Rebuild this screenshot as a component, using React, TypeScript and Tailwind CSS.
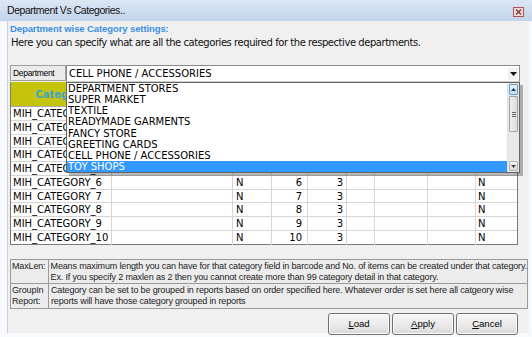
const rows = [
  { name: "MIH_CATEGORY_1", desc: "DEPARTMENT", num: 1 },
  { name: "MIH_CATEGORY_2", desc: "SECTION", num: 2 },
  { name: "MIH_CATEGORY_3", desc: "BRAND", num: 3 },
  { name: "MIH_CATEGORY_4", desc: "SIZE", num: 4 },
  { name: "MIH_CATEGORY_5", desc: "PHONE ACCESSORY", num: 5 },
  { name: "MIH_CATEGORY_6", desc: "", num: 6 },
  { name: "MIH_CATEGORY_7", desc: "", num: 7 },
  { name: "MIH_CATEGORY_8", desc: "", num: 8 },
  { name: "MIH_CATEGORY_9", desc: "", num: 9 },
  { name: "MIH_CATEGORY_10", desc: "", num: 10 },
];

const departments = [
  "DEPARTMENT STORES",
  "SUPER MARKET",
  "TEXTILE",
  "READYMADE GARMENTS",
  "FANCY STORE",
  "GREETING CARDS",
  "CELL PHONE / ACCESSORIES",
  "TOY SHOPS",
];

const WinButton = ({ hot, rest }: { hot: string; rest: string }) => (
  <button className="w-[62px] h-[22px] rounded-[3px] border border-[#707070] bg-gradient-to-b from-[#f6f6f6] via-[#ebebeb] to-[#d9d9d9] text-[9.5px] text-black font-['Liberation_Sans',sans-serif] shadow-[inset_0_0_0_1px_#fcfcfc]">
    <span className="underline">{hot}</span>
    {rest}
  </button>
);

export default function App() {
  return (
    <div className="w-[532px] h-[337px] overflow-hidden bg-[#f7f9fc] font-['DejaVu_Sans',sans-serif] text-black">
      {/* title bar */}
      <div className="h-[21px] flex items-center justify-between pl-[7px] pr-[8px] bg-gradient-to-b from-[#dce7f4] to-[#c2d4eb]">
        <span className="text-[10.5px] tracking-[-0.45px] font-['Liberation_Sans',sans-serif] text-[#111]">
          Department Vs Categories..
        </span>
        <div className="w-[11px] h-[10px] mt-[2px] border border-[#b05454] bg-[#e9dede] flex items-center justify-center">
          <svg width="7" height="6" viewBox="0 0 7 6">
            <path d="M1 0.5 L6 5.5 M6 0.5 L1 5.5" stroke="#8a3030" strokeWidth="1.3" />
          </svg>
        </div>
      </div>

      {/* body */}
      <div className="ml-[7px] mr-[3px] h-[312px] border-l border-[#c4d2e3] bg-[#f0f0f0] pl-[2px] flex flex-col">
        <div className="pt-[1px] leading-[14px] text-[9.5px] font-bold tracking-[-0.1px] font-['Liberation_Sans',sans-serif] text-[#3b8fe2]">
          Department wise Category settings:
        </div>
        <div className="leading-[14px] text-[10px] tracking-[-0.45px] pl-[1px] text-[#111]">
          Here you can specify what are all the categories required for the respective departments.
        </div>

        {/* department selector with open list */}
        <div className="relative mt-[15px] flex h-[17px] w-[510px]">
          <div className="w-[56px] h-[16px] border border-[#a0a0a0] bg-[#ebebeb] pl-[2px] text-[8.5px] leading-[14px] font-['Liberation_Sans',sans-serif] tracking-[-0.3px]">
            Department
          </div>
          <div className="flex-1 h-[17px] border border-[#8a8a8a] border-b-[#cfcfcf] bg-white flex items-center justify-between pl-[2px] pr-[1px]">
            <span className="text-[10px]">CELL PHONE / ACCESSORIES</span>
            <div className="w-[10px] h-[12px] bg-[#f2f2f2] flex items-center justify-center">
              <svg width="7" height="4" viewBox="0 0 7 4">
                <path d="M0 0 H7 L3.5 4 Z" fill="#111" />
              </svg>
            </div>
          </div>

          {/* dropdown list overlay */}
          <div className="absolute z-10 left-[56px] top-[17px] w-[454px] h-[91px] border border-[#646464] bg-white flex shadow-[3px_3px_0_rgba(0,0,0,0.28)]">
            <div className="flex-1">
              {departments.map((d) => (
                <div
                  key={d}
                  className={`h-[11.15px] leading-[11.15px] pl-[1px] text-[10px] ${
                    d === "TOY SHOPS" ? "bg-[#3399ff] text-white" : "text-black"
                  }`}
                >
                  {d}
                </div>
              ))}
            </div>
            <div className="w-[12px] bg-[#e9e9e9] flex flex-col border-l border-[#e0e0e0]">
              <div className="h-[11px] m-[1px] rounded-[1px] border border-[#6d98c4] bg-gradient-to-b from-[#e6f3fc] to-[#bfe0f7] flex items-center justify-center">
                <svg width="5" height="3" viewBox="0 0 5 3">
                  <path d="M0 3 L2.5 0 L5 3 Z" fill="#1b3a5c" />
                </svg>
              </div>
              <div className="h-[36px] mx-[1px] rounded-[1px] border border-[#a3a3a3] bg-gradient-to-r from-[#f0f0f0] to-[#dcdcdc] flex flex-col items-center justify-center gap-[1px]">
                <div className="w-[4px] h-px bg-[#666]" />
                <div className="w-[4px] h-px bg-[#666]" />
                <div className="w-[4px] h-px bg-[#666]" />
              </div>
              <div className="flex-1" />
              <div className="h-[10px] m-[1px] rounded-[1px] border border-[#b5b5b5] bg-gradient-to-b from-[#f3f3f3] to-[#dadada] flex items-center justify-center">
                <svg width="5" height="3" viewBox="0 0 5 3">
                  <path d="M0 0 L5 0 L2.5 3 Z" fill="#444" />
                </svg>
              </div>
            </div>
          </div>
        </div>

        {/* grid */}
        <div className="w-[508px] h-[163px] border border-[#7a7a7a] border-t-0 bg-white text-[10px]">
          <div className="flex h-[25px] bg-[#c5c40d] border-b border-[#a8a8a8]">
            <div className="w-[101px] border-r border-[#9a9a00] flex items-center justify-center font-bold text-[#3ea3c8]">
              Category
            </div>
            <div className="flex-1" />
          </div>
          {rows.map((r, i) => (
            <div
              key={r.name}
              className={`flex h-[13.75px] leading-[13px] ${
                i === rows.length - 1 ? "" : "border-b border-[#d6d6d6]"
              }`}
            >
              <div className="w-[101px] border-r border-[#d6d6d6] pl-[2px] whitespace-nowrap overflow-hidden">{r.name}</div>
              <div className="w-[121px] border-r border-[#d6d6d6] pl-[2px] whitespace-nowrap overflow-hidden">{r.desc}</div>
              <div className="w-[39px] border-r border-[#d6d6d6] pl-[3px]">N</div>
              <div className="w-[36px] border-r border-[#d6d6d6] pr-[5px] text-right">{r.num}</div>
              <div className="w-[39px] border-r border-[#d6d6d6] pr-[3px] text-right">3</div>
              <div className="w-[28px] border-r border-[#d6d6d6]" />
              <div className="w-[53px] border-r border-[#d6d6d6]" />
              <div className="w-[48px] border-r border-[#d6d6d6]" />
              <div className="flex-1 pl-[2px]">N</div>
            </div>
          ))}
        </div>

        {/* help */}
        <div className="mt-[14px] w-[518px] border border-[#9a9a9a] bg-[#ececec] text-[9px] leading-[11px] font-['Liberation_Sans',sans-serif] tracking-[-0.15px] text-[#222]">
          <div className="flex h-[24px] border-b border-[#9a9a9a]">
            <div className="w-[38px] border-r border-[#9a9a9a] pl-[1px] pt-[1px]">MaxLen:</div>
            <div className="flex-1 pl-[2px] pt-[1px] whitespace-nowrap">
              Means maximum length you can have for that category field in barcode and No. of items can be created under that category.
              <br />
              Ex. If you specify 2 maxlen as 2 then you cannot create more than 99 category detail in that category.
            </div>
          </div>
          <div className="flex h-[24px]">
            <div className="w-[38px] border-r border-[#9a9a9a] pl-[1px] pt-[1px]">
              GroupIn
              <br />
              Report:
            </div>
            <div className="flex-1 pl-[2px] pt-[1px] whitespace-nowrap">
              Category can be set to be grouped in reports based on order specified here. Whatever order is set here all catgeory wise
              <br />
              reports will have those category grouped in reports
            </div>
          </div>
        </div>

        {/* buttons */}
        <div className="mt-[4px] w-[508px] flex justify-end gap-[2px]">
          <WinButton hot="L" rest="oad" />
          <WinButton hot="A" rest="pply" />
          <WinButton hot="C" rest="ancel" />
        </div>
      </div>
    </div>
  );
}
